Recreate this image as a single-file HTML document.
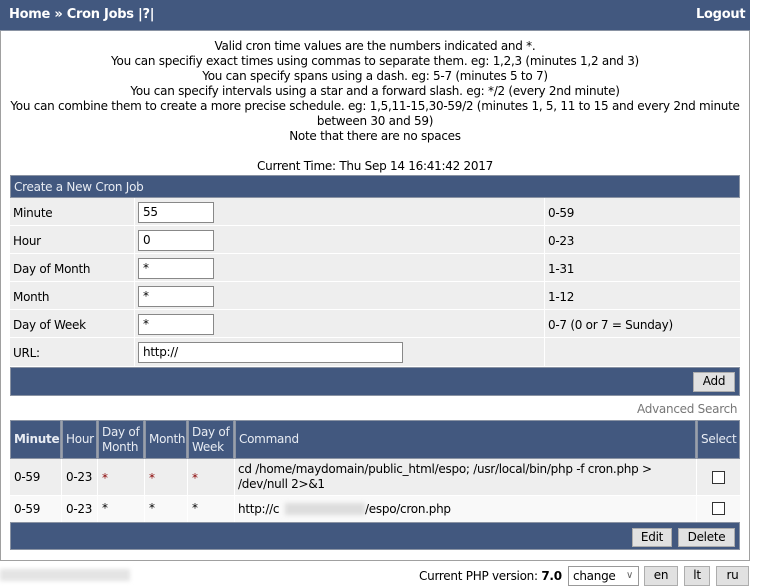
<!DOCTYPE html>
<html><head><meta charset="utf-8">
<style>
*{margin:0;padding:0;box-sizing:border-box}
body{width:760px;height:586px;background:#fff;font-family:"DejaVu Sans","Liberation Sans",sans-serif;font-size:12px;letter-spacing:-0.27px;color:#000;position:relative;overflow:hidden}
.a{position:absolute}
.bar{background:#42587f}
.help{left:1px;width:748px;top:39px;text-align:center;line-height:15px;white-space:nowrap}
.lab{position:absolute;left:13px}
.cell{position:absolute;background:#eee}
.inp{position:absolute;height:21px;border:1px solid #888;background:#fff;padding-left:4px;line-height:19px;font-size:12px}
.btn{position:absolute;background:#e1e1e1;border:1px solid #adadad;text-align:center;line-height:17px;font-size:12px}
.th{position:absolute;background:#42587f;color:#e8ecf3;border:1px solid #8a93a3;line-height:15px;padding-left:3px;display:flex;align-items:center;white-space:nowrap}
.td{position:absolute;padding-left:4px;display:flex;align-items:center;line-height:15px}
.r{color:#800}
.cb{position:absolute;width:13px;height:13px;border:1px solid #333;background:#fff}
</style></head><body>
<div class="a" style="left:0;top:0;width:750px;height:561px;border:1px solid #a0a0a0;border-top:none"></div>
<div class="a bar" style="left:0;top:0;width:750px;height:31px;border-bottom:1px solid #8a93a3"></div>
<div class="a" style="left:9px;top:7px;color:#fff;font-weight:bold;font-size:13px">Home » Cron Jobs |?|</div>
<div class="a" style="left:696px;top:7px;color:#fff;font-weight:bold;font-size:13px">Logout</div>
<div class="a help">Valid cron time values are the numbers indicated and *.<br>You can specifiy exact times using commas to separate them. eg: 1,2,3 (minutes 1,2 and 3)<br>You can specify spans using a dash. eg: 5-7 (minutes 5 to 7)<br>You can specify intervals using a star and a forward slash. eg: */2 (every 2nd minute)<br>You can combine them to create a more precise schedule. eg: 1,5,11-15,30-59/2 (minutes 1, 5, 11 to 15 and every 2nd minute<br>between 30 and 59)<br>Note that there are no spaces<br><br>Current Time: Thu Sep 14 16:41:42 2017</div>

<div class="a bar" style="left:10px;top:175px;width:730px;height:23px;border:1px solid #8a93a3"></div>
<div class="a" style="left:14px;top:180px;color:#e8ecf3">Create a New Cron Job</div>

<div class="cell" style="left:10px;top:198px;width:124px;height:27px"></div><div class="cell" style="left:135px;top:198px;width:409px;height:27px"></div><div class="cell" style="left:545px;top:198px;width:195px;height:27px"></div>
<div class="cell" style="left:10px;top:226px;width:124px;height:27px"></div><div class="cell" style="left:135px;top:226px;width:409px;height:27px"></div><div class="cell" style="left:545px;top:226px;width:195px;height:27px"></div>
<div class="cell" style="left:10px;top:254px;width:124px;height:27px"></div><div class="cell" style="left:135px;top:254px;width:409px;height:27px"></div><div class="cell" style="left:545px;top:254px;width:195px;height:27px"></div>
<div class="cell" style="left:10px;top:282px;width:124px;height:27px"></div><div class="cell" style="left:135px;top:282px;width:409px;height:27px"></div><div class="cell" style="left:545px;top:282px;width:195px;height:27px"></div>
<div class="cell" style="left:10px;top:310px;width:124px;height:27px"></div><div class="cell" style="left:135px;top:310px;width:409px;height:27px"></div><div class="cell" style="left:545px;top:310px;width:195px;height:27px"></div>
<div class="cell" style="left:10px;top:338px;width:124px;height:28px"></div><div class="cell" style="left:135px;top:338px;width:409px;height:28px"></div><div class="cell" style="left:545px;top:338px;width:195px;height:28px"></div>

<div class="lab" style="top:206px">Minute</div><div class="inp" style="left:138px;top:202px;width:76px">55</div><div class="lab" style="left:548px;top:206px">0-59</div>
<div class="lab" style="top:234px">Hour</div><div class="inp" style="left:138px;top:230px;width:76px">0</div><div class="lab" style="left:548px;top:234px">0-23</div>
<div class="lab" style="top:262px">Day of Month</div><div class="inp" style="left:138px;top:258px;width:76px">*</div><div class="lab" style="left:548px;top:262px">1-31</div>
<div class="lab" style="top:290px">Month</div><div class="inp" style="left:138px;top:286px;width:76px">*</div><div class="lab" style="left:548px;top:290px">1-12</div>
<div class="lab" style="top:318px">Day of Week</div><div class="inp" style="left:138px;top:314px;width:76px">*</div><div class="lab" style="left:548px;top:318px">0-7 (0 or 7 = Sunday)</div>
<div class="lab" style="top:346px">URL:</div><div class="inp" style="left:138px;top:342px;width:265px">http://</div>

<div class="a bar" style="left:10px;top:367px;width:730px;height:29px;border:1px solid #8a93a3"></div>
<div class="btn" style="left:693px;top:372px;width:42px;height:20px">Add</div>

<div class="a" style="left:637px;top:402px;color:#777">Advanced Search</div>

<div class="a" style="left:10px;top:420px;width:730px;height:39px;background:#9aa0aa"></div>
<div class="th" style="left:10px;top:420px;width:51px;height:39px;font-weight:bold">Minute</div>
<div class="th" style="left:62px;top:420px;width:35px;height:39px">Hour</div>
<div class="th" style="left:98px;top:420px;width:46px;height:39px">Day of<br>Month</div>
<div class="th" style="left:145px;top:420px;width:42px;height:39px">Month</div>
<div class="th" style="left:188px;top:420px;width:46px;height:39px">Day of<br>Week</div>
<div class="th" style="left:235px;top:420px;width:461px;height:39px">Command</div>
<div class="th" style="left:697px;top:420px;width:43px;height:39px;padding-left:3px">Select</div>

<div class="a" style="left:10px;top:459px;width:730px;height:36px;background:#eee"></div>
<div class="a" style="left:10px;top:496px;width:730px;height:26px;background:#f9f9f9"></div>
<div class="a" style="left:61px;top:459px;width:1px;height:63px;background:#fff"></div>
<div class="a" style="left:97px;top:459px;width:1px;height:63px;background:#fff"></div>
<div class="a" style="left:144px;top:459px;width:1px;height:63px;background:#fff"></div>
<div class="a" style="left:187px;top:459px;width:1px;height:63px;background:#fff"></div>
<div class="a" style="left:234px;top:459px;width:1px;height:63px;background:#fff"></div>
<div class="a" style="left:696px;top:459px;width:1px;height:63px;background:#fff"></div>

<div class="td" style="left:10px;top:459px;height:36px">0-59</div>
<div class="td" style="left:62px;top:459px;height:36px">0-23</div>
<div class="a r" style="left:102px;top:471px">*</div>
<div class="a r" style="left:149px;top:471px">*</div>
<div class="a r" style="left:192px;top:471px">*</div>
<div class="a" style="left:238px;top:462px;line-height:15px">cd /home/maydomain/public_html/espo; /usr/local/bin/php -f cron.php &gt;<br>/dev/null 2&gt;&amp;1</div>
<div class="cb" style="left:712px;top:471px"></div>

<div class="td" style="left:10px;top:496px;height:26px">0-59</div>
<div class="td" style="left:62px;top:496px;height:26px">0-23</div>
<div class="a" style="left:102px;top:501px">*</div>
<div class="a" style="left:149px;top:501px">*</div>
<div class="a" style="left:192px;top:501px">*</div>
<div class="a" style="left:238px;top:502px">http://c</div>
<div class="a" style="left:285px;top:503px;width:80px;height:12px;background:#ddd;filter:blur(2px)"></div>
<div class="a" style="left:365px;top:502px">/espo/cron.php</div>
<div class="cb" style="left:712px;top:502px"></div>

<div class="a bar" style="left:10px;top:522px;width:730px;height:28px;border:1px solid #8a93a3"></div>
<div class="btn" style="left:632px;top:528px;width:40px;height:19px">Edit</div>
<div class="btn" style="left:678px;top:528px;width:57px;height:19px">Delete</div>

<div class="a" style="left:0px;top:569px;width:130px;height:12px;background:#e4e4e4;filter:blur(2px)"></div>
<div class="a" style="left:419px;top:569px">Current PHP version: <b>7.0</b></div>
<div class="a" style="left:568px;top:566px;width:71px;height:20px;border:1px solid #999;background:#fff;padding-left:4px;line-height:18px">change<span style="position:absolute;right:5px;top:0;color:#666;font-size:10px">&#8744;</span></div>
<div class="btn" style="left:644px;top:566px;width:34px;height:20px">en</div>
<div class="btn" style="left:684px;top:566px;width:26px;height:20px">lt</div>
<div class="btn" style="left:716px;top:566px;width:33px;height:20px">ru</div>
</body></html>
